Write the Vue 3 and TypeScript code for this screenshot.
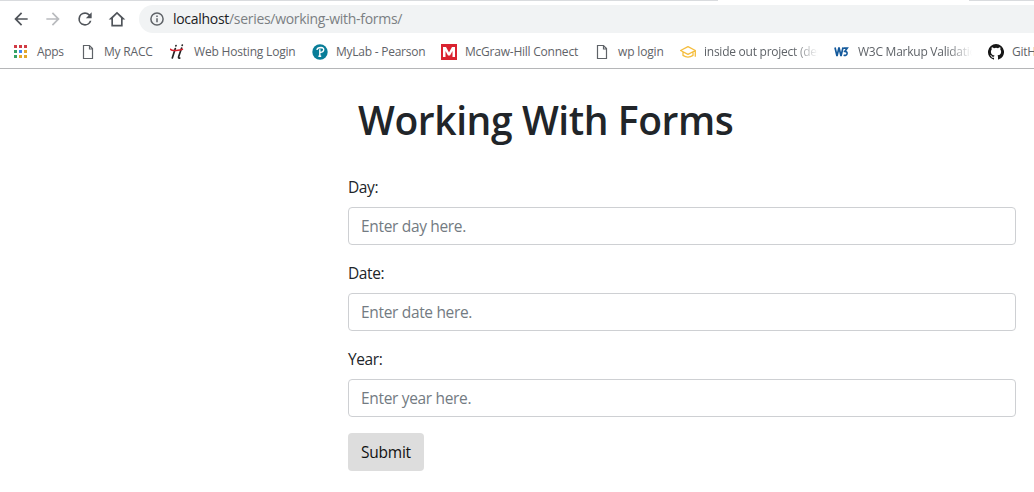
<script setup lang="ts">
interface Bookmark { icon: string; label: string; spacing: number; fade?: boolean }

const bookmarks: Bookmark[] = [
  { icon: 'apps', label: 'Apps', spacing: -0.35 },
  { icon: 'page', label: 'My RACC', spacing: -0.2 },
  { icon: 'hosting', label: 'Web Hosting Login', spacing: -0.19 },
  { icon: 'pearson', label: 'MyLab - Pearson', spacing: -0.25 },
  { icon: 'mcgraw', label: 'McGraw-Hill Connect', spacing: -0.23 },
  { icon: 'page', label: 'wp login', spacing: -0.15 },
  { icon: 'cap', label: 'inside out project (demo)', spacing: -0.25, fade: true },
  { icon: 'w3', label: 'W3C Markup Validation', spacing: -0.25, fade: true },
  { icon: 'github', label: 'GitHub', spacing: -0.25 },
]

const colors = ['#d13b45', '#d13b45', '#d13b45', '#35a265', '#4285f4', '#e3a72c', '#35a265', '#e3a72c', '#e3a72c']
const fields = ['Day', 'Date', 'Year']
</script>

<template>
  <div class="window">
    <div class="tabs"><i class="left"></i><i class="right"></i></div>
    <nav class="toolbar">
      <svg class="nav" viewBox="0 0 24 24"><path d="M20 11H7.83l5.59-5.59L12 4l-8 8 8 8 1.41-1.41L7.83 13H20z" /></svg>
      <svg class="nav off" viewBox="0 0 24 24"><path d="M4 11h12.17l-5.59-5.59L12 4l8 8-8 8-1.41-1.41L16.17 13H4z" /></svg>
      <svg class="nav" viewBox="0 0 24 24"><path d="M17.65 6.35A7.96 7.96 0 0 0 12 4a8 8 0 1 0 7.73 10h-2.08A6 6 0 1 1 12 6c1.66 0 3.14.69 4.22 1.78L13 11h7V4z" /></svg>
      <svg class="nav" viewBox="0 0 24 24"><path d="M12 3.2 2 12.6h3.200V21h13.600v-8.400H22zM7.200 19v-8.300L12 6.100l4.800 4.600V19z" /></svg>
      <div class="address">
        <svg class="info" viewBox="0 0 14 14"><circle cx="7" cy="7" r="6.1" /><path d="M7 6.2v4M7 3.6v1.5" /></svg>
        <span class="url"><b>localhost</b>/series/working-with-forms/</span>
      </div>
    </nav>
    <div class="bookmarks">
      <div v-for="(item, n) in bookmarks" :key="n" class="bookmark">
        <svg class="icon" viewBox="0 0 16 16">
          <g v-if="item.icon === 'apps'">
            <rect v-for="(c, i) in colors" :key="i" :x="1 + (i % 3) * 5" :y="1 + Math.floor(i / 3) * 5" width="3" height="3" :fill="c" />
          </g>
          <path v-else-if="item.icon === 'page'" d="M3.5 1.5h6l3 3v10h-9zM9.5 1.5v3.500h3" fill="none" stroke="#5f6368" stroke-width="1.2" />
          <g v-else-if="item.icon === 'hosting'" fill="none" stroke-linecap="round">
            <path d="M5.300 4.500 2.300 14M11.600 4 8.800 12.200q-.8 2.400 1 1.800M6 1.500l-.1.400M12.300 1l-.1.400" stroke="#242424" stroke-width="1.700" />
            <path d="M.400 5.200q1 1.700 5.600 1.300t6.500-1.300" stroke="#d9222f" stroke-width="1.500" />
          </g>
          <g v-else-if="item.icon === 'pearson'">
            <circle cx="8" cy="8" r="7.700" fill="#087d98" />
            <path d="M5 6q.2-2.500 4-2.500 3 .2 2.700 2.500-.3 2.300-3.700 2.600M7.800 5.200v6.800M6.400 12.300h2.800" fill="none" stroke="#fff" stroke-width="1.400" />
          </g>
          <g v-else-if="item.icon === 'mcgraw'">
            <path d="M0 0h16v16H0z" fill="#da2330" />
            <path d="M2 13V3h3l3 5.400L11 3h3v10h-2.500V7L9 11.500H7L4.500 7v6z" fill="#fff" />
          </g>
          <g v-else-if="item.icon === 'cap'" fill="none" stroke="#f5bd3d" stroke-width="1.300" stroke-linejoin="round">
            <path d="M.600 6.500 8 2.700l7.400 3.800L8 10.300zM3 8v3.400q5 3.400 10 0V8M15.300 6.500v6.300" />
          </g>
          <g v-else-if="item.icon === 'w3'" fill="none" stroke="#155a9c" stroke-width="1.700">
            <path d="m1 3.500 2 8.500M5 3.500 3 12M5 3.500 7 12 9 3.500M9.500 4.200h3.700l-2.300 3.100q2.500.2 2.100 2.600-.6 2.200-3.400 1.300" />
          </g>
          <path v-else fill="#171717" d="M8 0a8 8 0 0 0-2.530 15.590c.4.070.55-.17.550-.38v-1.490c-2.230.49-2.700-.95-2.700-.95-.36-.92-.89-1.170-.89-1.170-.73-.5.050-.49.050-.49.810.06 1.230.83 1.230.83.720 1.230 1.880.87 2.340.67.070-.52.280-.87.500-1.070-1.770-.2-3.640-.89-3.640-3.950 0-.88.310-1.590.820-2.150-.08-.2-.36-1.020.08-2.120 0 0 .67-.22 2.200.82a7.600 7.600 0 0 1 4 0c1.530-1.040 2.200-.82 2.200-.82.440 1.100.16 1.920.08 2.120.51.560.820 1.270.820 2.150 0 3.070-1.870 3.750-3.650 3.950.29.250.54.730.54 1.480v2.190c0 .21.150.46.550.38A8 8 0 0 0 8 0z" />
        </svg>
        <span class="label" :class="{ fade: item.fade }" :style="{ letterSpacing: item.spacing + 'px' }">{{ item.label }}</span>
      </div>
    </div>
    <main>
      <h1>Working With Forms</h1>
      <form @submit.prevent>
        <div v-for="field in fields" :key="field" class="group">
          <label :for="field">{{ field }}:</label>
          <input :id="field" type="text" :placeholder="`Enter ${field.toLowerCase()} here.`" />
        </div>
        <button type="submit">Submit</button>
      </form>
    </main>
  </div>
</template>

<style scoped>
.window { width: 1034px; height: 492px; overflow: hidden; background: #fff; font-family: "Open Sans", "Noto Sans", sans-serif; color: #212529; }
.tabs { display: flex; justify-content: space-between; height: 1px; }
.tabs i { background: #d9dbde; }
.left { width: 718px; }
.right { width: 65px; }
.toolbar { display: flex; align-items: center; height: 36px; padding-left: 11px; box-sizing: border-box; }
.nav { width: 20px; height: 20px; margin-right: 12px; fill: #50545a; flex: none; }
.off { fill: #b9bbbe; }
.address { display: flex; align-items: center; flex: 1; height: 28px; background: #f1f3f4; border-radius: 14px 0 0 14px; padding-left: 11px; }
.info { width: 14px; height: 14px; fill: none; stroke: #5f6368; stroke-width: 1.5; margin-right: 9px; }
.url { font-size: 14px; line-height: 20px; letter-spacing: -.3px; color: #7b7f83; white-space: nowrap; }
.url b { font-weight: 400; color: #202124; }
.bookmarks { display: grid; grid-template-columns: 67px 90px 142px 129px 153px 86px 154px 154px 80px; height: 29px; padding: 0 0 2px 13px; border-bottom: 1px solid #b5b6b8; align-items: center; }
.bookmark { display: flex; align-items: center; padding-right: 16px; min-width: 0; }
.icon { width: 16px; height: 16px; margin-right: 8px; flex: none; }
.label { font-size: 12px; line-height: 18px; color: #5f6368; white-space: nowrap; }
.fade { overflow: hidden; mask-image: linear-gradient(to right, #000 78%, transparent); flex: 1; }
main { margin-left: 348px; width: 668px; padding-top: 27px; }
h1 { margin: 0; padding-left: 10px; font-size: 39px; line-height: 48px; font-weight: 600; letter-spacing: -.42px; white-space: nowrap; }
form { padding-top: 31px; }
.group { margin-bottom: 16px; }
label { display: block; font-size: 15.5px; line-height: 24px; letter-spacing: -.4px; margin-bottom: 8px; }
input { display: block; box-sizing: border-box; width: 100%; height: 38px; padding: 6px 12px; border: 1px solid #ced0d3; border-radius: 4px; background: #fff; font: 15.5px/24px "Open Sans", sans-serif; letter-spacing: -.33px; outline: none; }
input::placeholder { color: #737b82; opacity: 1; }
button { display: block; width: 76px; height: 38px; border: 0; border-radius: 4px; padding: 0; background: #ddd; color: #111; font: 15.5px/24px "Open Sans", sans-serif; letter-spacing: -.25px; }
</style>

<style>
body { margin: 0; overflow: hidden; }
</style>
